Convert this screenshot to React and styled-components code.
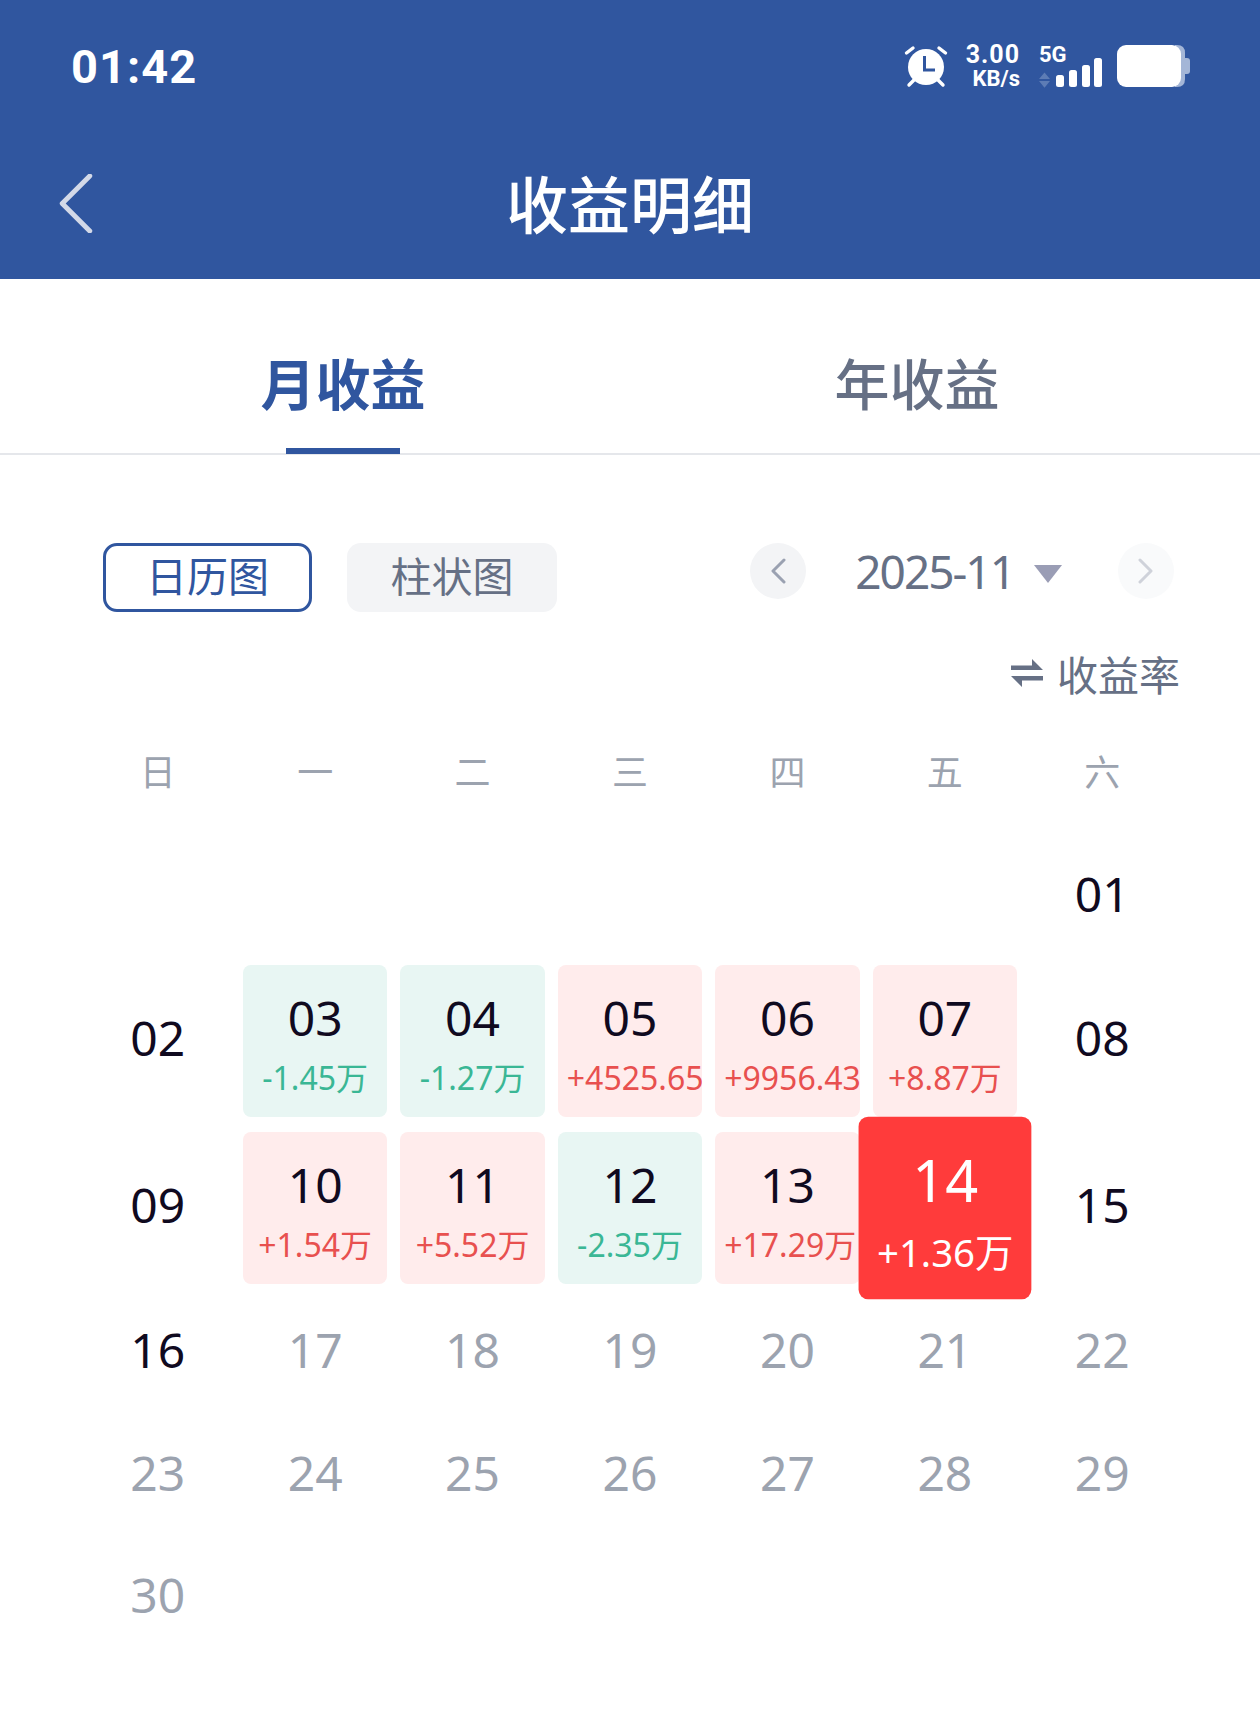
import styled, { createGlobalStyle } from 'styled-components'

const Global = createGlobalStyle`
  html, body { margin: 0; padding: 0; background: #fff; }
  body { font-family: "Noto Sans", "Noto Sans CJK SC", sans-serif; }
`

const WEEK = ['日', '一', '二', '三', '四', '五', '六']

const DAYS = [
  ...Array(6).fill(null),
  { d: '01', now: true },
  { d: '02', now: true },
  { d: '03', sub: '-1.45万', tone: 'down' },
  { d: '04', sub: '-1.27万', tone: 'down' },
  { d: '05', sub: '+4525.65', tone: 'up' },
  { d: '06', sub: '+9956.43', tone: 'up' },
  { d: '07', sub: '+8.87万', tone: 'up' },
  { d: '08', now: true },
  { d: '09', now: true },
  { d: '10', sub: '+1.54万', tone: 'up' },
  { d: '11', sub: '+5.52万', tone: 'up' },
  { d: '12', sub: '-2.35万', tone: 'down' },
  { d: '13', sub: '+17.29万', tone: 'up' },
  { d: '14', sub: '+1.36万', tone: 'today' },
  { d: '15', now: true },
  { d: '16', now: true },
  ...['17', '18', '19', '20', '21', '22', '23', '24', '25', '26', '27', '28', '29', '30'].map((d) => ({ d })),
]

const Chevron = ({ dir, color }) => (
  <svg width="16" height="26" viewBox="0 0 16 26" fill="none">
    <path
      d={dir === 'left' ? 'M14 2 L3 13 L14 24' : 'M2 2 L13 13 L2 24'}
      stroke={color}
      strokeWidth="3"
      strokeLinecap="round"
      strokeLinejoin="round"
    />
  </svg>
)

const AlarmIcon = () => (
  <svg width="44" height="44" viewBox="0 0 44 44" fill="none">
    <circle cx="22" cy="23" r="18" fill="#fff" />
    <path d="M20.5 12 V26 H31" stroke="#30569f" strokeWidth="3" />
    <path d="M2.5 9 L9 4 M41.5 9 L35 4 M5 41 L10 36 M39 41 L34 36" stroke="#fff" strokeWidth="3.4" strokeLinecap="round" />
  </svg>
)

const SignalIcon = () => (
  <svg width="64" height="30" viewBox="0 0 64 30">
    <path d="M0 21 L5.5 14.5 L11 21 Z M0 23 H11 L5.5 29.7 Z" fill="#5d7cb5" />
    <rect x="17" y="17" width="8" height="12" rx="2.5" fill="#fff" />
    <rect x="30" y="12" width="8" height="17" rx="2.5" fill="#fff" />
    <rect x="43" y="7" width="8" height="22" rx="2.5" fill="#fff" />
    <rect x="55" y="0" width="8" height="29" rx="2.5" fill="#fff" />
  </svg>
)

const BatteryIcon = () => (
  <svg width="73" height="44" viewBox="0 0 73 44">
    <path d="M58 1 H60 Q68 1 68 9 V35 Q68 43 60 43 H58 Z" fill="#a4b6d7" />
    <path d="M68 14 H70 Q73 14 73 17 V27 Q73 30 70 30 H68 Z" fill="#a4b6d7" />
    <rect x="0" y="1" width="64" height="42" rx="9" fill="#fff" />
  </svg>
)

const SwapIcon = () => (
  <svg width="32" height="30" viewBox="0 0 32 30">
    <path d="M0 7.5 H21 V1 L32 12 H0 Z" fill="#667085" />
    <path d="M32 18 H0 L11 29 V22.5 H32 Z" fill="#667085" />
  </svg>
)

const App = () => {
  return (
    <S.Page>
      <Global />
      <S.Header>
        <S.StatusBar>
          <S.Time>01:42</S.Time>
          <S.StatusIcons>
            <AlarmIcon />
            <S.Speed>
              <span>3.00</span>
              <small>KB/s</small>
            </S.Speed>
            <S.Signal>
              <S.FiveG>5G</S.FiveG>
              <SignalIcon />
            </S.Signal>
            <BatteryIcon />
          </S.StatusIcons>
        </S.StatusBar>
        <S.NavBar>
          <S.BackIcon viewBox="0 0 34 60" fill="none">
            <path d="M31 2 L3 30 L31 58" stroke="#d3d9e8" strokeWidth="5" strokeLinecap="round" strokeLinejoin="round" />
          </S.BackIcon>
          <S.Title>收益明细</S.Title>
        </S.NavBar>
      </S.Header>

      <S.Tabs>
        <S.Tab $active>月收益</S.Tab>
        <S.Tab>年收益</S.Tab>
      </S.Tabs>

      <S.Toolbar>
        <S.ToggleGroup>
          <S.Toggle $active>日历图</S.Toggle>
          <S.Toggle>柱状图</S.Toggle>
        </S.ToggleGroup>
        <S.MonthPicker>
          <S.RoundButton>
            <Chevron dir="left" color="#9aa1b1" />
          </S.RoundButton>
          <S.Month>2025-11</S.Month>
          <S.Caret />
          <S.RoundButton $off>
            <Chevron dir="right" color="#cfd2da" />
          </S.RoundButton>
        </S.MonthPicker>
      </S.Toolbar>

      <S.RateRow>
        <SwapIcon />
        <span>收益率</span>
      </S.RateRow>

      <S.WeekRow>
        {WEEK.map((w) => (
          <S.WeekDay key={w}>{w}</S.WeekDay>
        ))}
      </S.WeekRow>

      <S.Calendar>
        {DAYS.map((day, i) => {
          if (!day) return <div key={i} />
          if (day.tone) {
            return (
              <S.Card key={day.d} $tone={day.tone}>
                <S.CardDay>{day.d}</S.CardDay>
                <S.CardSub $tone={day.tone}>{day.sub}</S.CardSub>
              </S.Card>
            )
          }
          return (
            <S.Plain key={day.d} $now={day.now}>
              {day.d}
            </S.Plain>
          )
        })}
      </S.Calendar>
    </S.Page>
  )
}

export default App

const S = {}

S.Page = styled.div`
  width: 1260px;
  height: 1736px;
  overflow: hidden;
  background: #fff;
`
S.Header = styled.header`
  background: #30569f;
  color: #fff;
`
S.StatusBar = styled.div`
  height: 132px;
  display: flex;
  align-items: center;
  justify-content: space-between;
  padding: 0 70px 0 71px;
`
S.Time = styled.div`
  font-family: 'Roboto', sans-serif;
  font-size: 47px;
  font-weight: 700;
  letter-spacing: 1px;
  margin-top: 1px;
`
S.StatusIcons = styled.div`
  display: flex;
  align-items: center;
  gap: 14px;
`
S.Speed = styled.div`
  margin-left: 4px;
  padding-top: 2px;
  display: flex;
  flex-direction: column;
  align-items: flex-end;
  font-family: 'Roboto', sans-serif;
  font-weight: 700;
  font-size: 25px;
  line-height: 24px;
  letter-spacing: 1px;
  small {
    font-size: 22px;
    line-height: 24px;
    letter-spacing: 0;
  }
`
S.Signal = styled.div`
  position: relative;
  padding-top: 14px;
  display: flex;
  margin-left: 5px;
`
S.FiveG = styled.span`
  position: absolute;
  left: 0;
  top: -2px;
  font-family: 'Roboto', sans-serif;
  font-size: 22px;
  font-weight: 700;
`
S.NavBar = styled.div`
  position: relative;
  height: 147px;
  display: flex;
  align-items: center;
  justify-content: center;
`
S.BackIcon = styled.svg`
  position: absolute;
  left: 59px;
  top: 42px;
  width: 34px;
  height: 59px;
`
S.Title = styled.h1`
  margin: 0 0 1px;
  font-size: 62px;
  font-weight: 500;
  line-height: 1;
`
S.Tabs = styled.nav`
  height: 174px;
  padding: 0 56px;
  display: grid;
  grid-template-columns: 1fr 1fr;
  border-bottom: 2px solid #e5e7eb;
`
S.Tab = styled.div`
  position: relative;
  display: flex;
  justify-content: center;
  align-items: center;
  padding-top: 30px;
  font-size: 55px;
  font-weight: ${(p) => (p.$active ? 700 : 500)};
  color: ${(p) => (p.$active ? '#30569f' : '#667085')};
  ${(p) =>
    p.$active &&
    `
    &::after {
      content: '';
      position: absolute;
      left: 50%;
      bottom: -1px;
      width: 114px;
      height: 6px;
      margin-left: -57px;
      background: #30569f;
    }
  `}
`
S.Toolbar = styled.div`
  margin-top: 88px;
  padding: 0 86px 0 103px;
  display: flex;
  justify-content: space-between;
  align-items: flex-start;
`
S.ToggleGroup = styled.div`
  display: flex;
  gap: 35px;
`
S.Toggle = styled.div`
  box-sizing: border-box;
  width: ${(p) => (p.$active ? 209 : 210)}px;
  height: 69px;
  padding-bottom: 8px;
  display: flex;
  align-items: center;
  justify-content: center;
  border-radius: 14px;
  font-size: 41px;
  color: ${(p) => (p.$active ? '#30569f' : '#667085')};
  background: ${(p) => (p.$active ? '#fff' : '#f3f4f6')};
  border: ${(p) => (p.$active ? '3px solid #30569f' : 'none')};
`
S.MonthPicker = styled.div`
  display: flex;
  align-items: center;
`
S.RoundButton = styled.div`
  width: 56px;
  height: 56px;
  border-radius: 50%;
  display: flex;
  align-items: center;
  justify-content: center;
  background: ${(p) => (p.$off ? '#f9fafb' : '#f3f4f6')};
`
S.Month = styled.div`
  margin-left: 49px;
  font-size: 46px;
  line-height: 56px;
  letter-spacing: -2px;
  color: #667085;
`
S.Caret = styled.div`
  margin: 6px 56px 0 20px;
  width: 0;
  height: 0;
  border-left: 14px solid transparent;
  border-right: 14px solid transparent;
  border-top: 18px solid #9a9db5;
`
S.RateRow = styled.div`
  height: 64px;
  margin-top: 29px;
  padding-right: 80px;
  display: flex;
  justify-content: flex-end;
  align-items: center;
  gap: 14px;
  font-size: 41px;
  color: #667085;
`
S.WeekRow = styled.div`
  margin-top: 25px;
  padding: 0 79px;
  height: 80px;
  display: grid;
  grid-template-columns: repeat(7, 1fr);
  align-items: center;
`
S.WeekDay = styled.div`
  text-align: center;
  font-size: 36px;
  color: #9ca3af;
`
S.Calendar = styled.div`
  margin-top: 25px;
  padding: 0 79px;
  display: grid;
  grid-template-columns: repeat(7, 1fr);
  grid-template-rows: 122px 167px 167px 123px 122px 122px;
`
S.Plain = styled.div`
  display: flex;
  align-items: center;
  justify-content: center;
  padding-bottom: 6px;
  font-size: 48px;
  color: ${(p) => (p.$now ? '#100a1f' : '#9ca3af')};
`
const cardBg = { up: '#ffecec', down: '#e8f6f3', today: '#ff3b3b' }
const subColor = { up: '#e8504f', down: '#3ab795', today: '#fff' }
S.Card = styled.div`
  margin: 8px 6.5px 7px;
  padding: 0 9px;
  border-radius: 8px;
  overflow: hidden;
  text-align: center;
  white-space: nowrap;
  background: ${(p) => cardBg[p.$tone]};
  color: ${(p) => (p.$tone === 'today' ? '#fff' : '#100a1f')};
  ${(p) => p.$tone === 'today' && 'transform: scale(1.2); position: relative; z-index: 1;'}
`
S.CardDay = styled.div`
  margin-top: 23px;
  font-size: 48px;
  line-height: 60px;
`
S.CardSub = styled.div`
  margin-top: 10px;
  font-size: 32px;
  line-height: 40px;
  color: ${(p) => subColor[p.$tone]};
`
